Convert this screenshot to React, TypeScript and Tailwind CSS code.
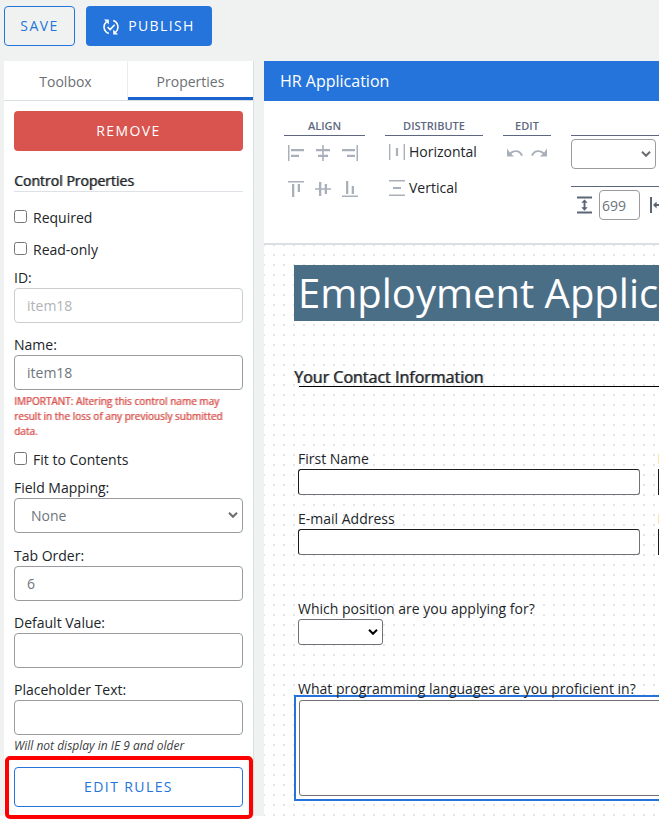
import type { ReactNode } from "react";

const INPUT =
  "block h-[35px] w-full rounded border border-[#999b9e] bg-white px-3 text-sm text-[#6c757d] disabled:border-[#cbcdcf] disabled:text-[#b0b3b6]";

function Field({ label, id, children }: { label: string; id: string; children: ReactNode }) {
  return (
    <div>
      <label htmlFor={id} className="block text-sm leading-[21px]">
        {label}
      </label>
      {children}
    </div>
  );
}

function Check({ label }: { label: string }) {
  return (
    <label className="flex h-8 items-center gap-[6px] text-sm">
      <input type="checkbox" className="mb-[3px] size-[13px]" />
      {label}
    </label>
  );
}

function Chevron({ className }: { className: string }) {
  return (
    <svg viewBox="0 0 10 6" fill="none" stroke="currentColor" strokeWidth="2" className={`pointer-events-none absolute h-[6px] w-[10px] ${className}`}>
      <path d="M1 .8 5 4.8 9 .8" />
    </svg>
  );
}

function Glyph({ d }: { d: string }) {
  return (
    <svg viewBox="0 0 16 16" className="size-4 text-[#a9b0ba]" fill="currentColor" aria-hidden="true">
      <path d={d} />
    </svg>
  );
}

const ICONS = {
  left: "M0 0h1.5v16H0zM3 4h13v2.3H3zM3 9.7h8V12H3z",
  center: "M7.2 0h1.6v4H15v2.3H8.8v3.4H13V12H8.8v4H7.2v-4H3V9.7h4.2V6.3H1V4h6.2z",
  right: "M14.5 0H16v16h-1.5zM0 4h13v2.3H0zM5 9.7h8V12H5z",
  top: "M0 0h16v1.5H0zM4 3h2.3v13H4zM9.7 3H12v8H9.7z",
  middle: "M0 7.2h4V1h2.3v6.2h3.4V3H12v4.2h4v1.6h-4V13H9.7V8.8H6.3V15H4V8.8H0z",
  bottom: "M0 14.5h16V16H0zM4 0h2.3v13H4zM9.7 5H12v8H9.7z",
  distH: "M0 0h1.4v16H0zM14.6 0H16v16h-1.4zM6.9 4h2.2v8H6.9z",
  distV: "M0 0h16v1.4H0zM0 14.6h16V16H0zM4 6.9h8v2.2H4z",
  undo: "M0 3.5v8h7L4.4 8.9C7.8 5.8 12.5 6.5 14 11l2-.7C13.9 4.6 7.5 3.6 2.9 7.4z",
  redo: "M16 3.5v8H9l2.6-2.6C8.2 5.8 3.5 6.5 2 11l-2-.7C2.1 4.6 8.5 3.6 13.1 7.4z",
};

function IconButton({ name, icon }: { name: string; icon: string }) {
  return (
    <button type="button" aria-label={name} title={name}>
      <Glyph d={icon} />
    </button>
  );
}

function Group({ title, children, className }: { title: string; children: ReactNode; className: string }) {
  return (
    <section className={`shrink-0 ${className}`}>
      <h2 className="h-[18px] border-b border-[#5d6880] text-center text-[11px] leading-4 font-semibold text-[#5d6880]">{title}</h2>
      {children}
    </section>
  );
}

const BOX = "block h-[26px] w-full rounded-[3px] border border-[#6f7276] border-t-[#1b1c1e] border-l-[#1b1c1e] bg-white px-1 text-sm";

function FormText({ label, id }: { label: string; id: string }) {
  return (
    <div className="w-[342px] shrink-0">
      <label htmlFor={id} className="block text-sm leading-5">
        {label}
      </label>
      <input id={id} type="text" className={BOX} />
    </div>
  );
}

function EdgeField({ name }: { name: string }) {
  return (
    <div className="w-[342px] shrink-0">
      <div className="flex h-5 items-center">
        <span className="h-[10px] w-2 bg-[#fde5a8]" />
      </div>
      <input type="text" aria-label={name} className="block h-[26px] w-full border border-[#1b1c1e] bg-white" />
    </div>
  );
}

function Sidebar() {
  return (
    <aside className="w-[250px] shrink-0 border-r border-[#dadfe3] bg-white">
      <div role="tablist" className="flex h-10 border-b border-[#dadfe3] text-sm text-[#6c6f73]">
        <button role="tab" aria-selected="false" type="button" className="w-[124px] border-r border-[#eaecee] pt-[3px]">
          Toolbox
        </button>
        <button role="tab" aria-selected="true" type="button" className="flex-1 border-b-[3px] border-[#1b62cc] pt-[6px]">
          Properties
        </button>
      </div>
      <div className="px-[10px] pt-[10px] pb-[9px]">
        <button type="button" className="block h-10 w-full rounded bg-[#d9534f] text-sm tracking-widest text-white">
          REMOVE
        </button>
        <h2 className="mt-5 mb-[10px] h-[21px] border-b border-[#dee2e6] text-sm leading-5 [text-shadow:1px_0_rgb(33_37_41/60%)]">
          Control Properties
        </h2>
        <Check label="Required" />
        <Check label="Read-only" />
        <div className="mt-[1px] space-y-[11px]">
          <Field label="ID:" id="ctl-id">
            <input id="ctl-id" type="text" disabled defaultValue="item18" className={INPUT} />
          </Field>
          <Field label="Name:" id="ctl-name">
            <input id="ctl-name" type="text" defaultValue="item18" className={INPUT} />
          </Field>
        </div>
        <p className="mt-1 mb-[5px] text-[10px] leading-[15px] text-[#d9534f] [text-shadow:1px_0_rgb(217_83_79/60%)]">
          IMPORTANT: Altering this control name may result in the loss of any previously submitted data.
        </p>
        <Check label="Fit to Contents" />
        <div className="space-y-[11px] pt-px">
          <Field label="Field Mapping:" id="ctl-map">
            <div className="relative pb-px">
              <select id="ctl-map" className={`${INPUT} appearance-none pl-4`}>
                <option>None</option>
              </select>
              <Chevron className="top-[14px] right-[5px] text-[#6a6c6f]" />
            </div>
          </Field>
          <Field label="Tab Order:" id="ctl-tab">
            <input id="ctl-tab" type="text" defaultValue="6" className={INPUT} />
          </Field>
          <Field label="Default Value:" id="ctl-default">
            <input id="ctl-default" type="text" className={INPUT} />
          </Field>
          <Field label="Placeholder Text:" id="ctl-ph">
            <input id="ctl-ph" type="text" className={INPUT} />
          </Field>
        </div>
        <p className="mt-[3px] text-xs leading-4 text-[#3d4043] italic">Will not display in IE 9 and older</p>
        <div className="relative mt-[13px]">
          <button type="button" className="block h-10 w-full rounded border border-[#2574db] text-sm tracking-widest text-[#2574db]">
            EDIT RULES
          </button>
          <div className="pointer-events-none absolute -top-[11px] -right-[10px] -bottom-3 -left-[9px] rounded-[5px] border-4 border-[#fe0000]" />
        </div>
      </div>
    </aside>
  );
}

function Toolbar() {
  return (
    <div className="flex h-36 gap-5 overflow-hidden border-b-2 border-[#dadfe3] bg-white pt-[17px] pl-5">
      <Group title="ALIGN" className="w-[81px]">
        <div className="grid grid-cols-[16px_16px_16px] gap-x-[11px] gap-y-5 px-1 pt-[9px]">
          <IconButton name="Align left" icon={ICONS.left} />
          <IconButton name="Align center" icon={ICONS.center} />
          <IconButton name="Align right" icon={ICONS.right} />
          <IconButton name="Align top" icon={ICONS.top} />
          <IconButton name="Align middle" icon={ICONS.middle} />
          <IconButton name="Align bottom" icon={ICONS.bottom} />
        </div>
      </Group>
      <Group title="DISTRIBUTE" className="w-[98px]">
        <div className="space-y-1">
          <button type="button" className="flex h-8 items-center gap-1 pl-1 text-sm">
            <Glyph d={ICONS.distH} />
            Horizontal
          </button>
          <button type="button" className="flex h-8 items-center gap-1 pl-1 text-sm">
            <Glyph d={ICONS.distV} />
            Vertical
          </button>
        </div>
      </Group>
      <Group title="EDIT" className="w-12">
        <div className="flex justify-center gap-2 pt-[9px]">
          <IconButton name="Undo" icon={ICONS.undo} />
          <IconButton name="Redo" icon={ICONS.redo} />
        </div>
      </Group>
      <Group title="" className="w-[240px]">
        <div className="relative mt-[3px] w-[85px]">
          <select aria-label="Style" className="block h-[30px] w-full appearance-none rounded border border-[#999b9e] bg-white" />
          <Chevron className="top-3 right-[5px] text-[#6a6c6f]" />
        </div>
        <div className="mt-[17px] flex items-center gap-[7px] border-t border-[#5d6880] pt-[3px] pl-[6px]">
          <svg viewBox="0 0 16 18" className="h-[18px] w-[15px] text-[#5a6576]" fill="currentColor" aria-hidden="true">
            <path d="M0 0h16v2H0zM0 16h16v2H0zM8 3l3.4 3.6H9v4.8h2.4L8 15l-3.4-3.6H7V6.6H4.6z" />
          </svg>
          <input aria-label="Height" type="text" defaultValue="699" className="h-[30px] w-[41px] rounded border border-[#999b9e] px-[2px] text-sm text-[#6c757d]" />
          <svg viewBox="0 0 18 16" className="ml-[3px] h-4 w-[18px] text-[#5a6576]" fill="currentColor" aria-hidden="true">
            <path d="M0 0h2v16H0zM16 0h2v16h-2zM3 8l3.6-3.4V7h4.8V4.6L15 8l-3.6 3.4V9H6.6v2.4z" />
          </svg>
        </div>
      </Group>
    </div>
  );
}

function Canvas() {
  return (
    <div className="flex-1 overflow-hidden bg-white bg-[conic-gradient(at_2px_2px,transparent_270deg,#e4e4e4_0)] bg-[size:10px_10px] bg-[position:9px_9px] pt-5 pl-[30px]">
      <h1 className="h-14 bg-[#4b6e87] pl-1 text-[40px] leading-14 whitespace-nowrap text-white">Employment Application</h1>
      <h2 className="mt-[45px] h-5 text-base leading-[22px] [text-shadow:1px_0_rgb(33_37_41/60%)]">Your Contact Information</h2>
      <hr className="ml-[5px] border-black" />
      <div className="space-y-[14px] pt-[62px] pl-1">
        <div className="flex gap-[18px]">
          <FormText label="First Name" id="first" />
          <EdgeField name="Last Name" />
        </div>
        <div className="flex gap-[18px]">
          <FormText label="E-mail Address" id="email" />
          <EdgeField name="Phone" />
        </div>
      </div>
      <div className="pt-11 pl-1">
        <label htmlFor="position" className="block text-sm leading-5">
          Which position are you applying for?
        </label>
        <div className="relative w-[85px]">
          <select id="position" className="block h-[26px] w-full appearance-none rounded-[3px] border border-[#6f7276] bg-white" />
          <Chevron className="top-[10px] right-[5px] text-black" />
        </div>
      </div>
      <label htmlFor="languages" className="mt-[34px] block h-4 pl-1 text-sm leading-5">
        What programming languages are you proficient in?
      </label>
      <div className="w-[700px] border-2 border-[#2574db] bg-white p-[3px]">
        <textarea id="languages" className="block h-24 w-full resize-none rounded-[3px] border border-[#6f7276] bg-white" />
      </div>
    </div>
  );
}

export default function App() {
  return (
    <div className="min-h-screen overflow-hidden bg-white pb-[11px] font-['Open_Sans','Noto_Sans',sans-serif] text-[#212529]">
      <div className="bg-[#f0f2f2] pt-[6px] pl-1">
        <header className="flex gap-[11px]">
          <button type="button" className="h-10 w-[71px] rounded border border-[#2574db] text-sm tracking-widest text-[#2574db]">
            SAVE
          </button>
          <button type="button" className="flex h-10 w-[126px] items-center justify-center gap-[9px] rounded bg-[#2574db] text-sm tracking-widest text-white">
            <svg viewBox="0 0 16 16" className="mt-px size-4" fill="none" stroke="currentColor" strokeWidth="1.6" aria-hidden="true">
              <path d="M5.8 14.5A6.8 6.8 0 0 1 3.4 2.9M10.2 1.5A6.8 6.8 0 0 1 12.6 13.1M4.6 8l2.5 2.5 4.6-4.8" />
              <path d="M1 .6h4.8v4.8zM15 15.4h-4.8v-4.8z" fill="currentColor" stroke="none" />
            </svg>
            PUBLISH
          </button>
        </header>
        <main className="mt-[15px] flex gap-[10px]">
          <Sidebar />
          <div className="flex min-w-0 flex-1 flex-col">
            <div className="h-10 bg-[#2574db] pl-4 text-base leading-10 text-white">HR Application</div>
            <Toolbar />
            <Canvas />
          </div>
        </main>
      </div>
    </div>
  );
}
